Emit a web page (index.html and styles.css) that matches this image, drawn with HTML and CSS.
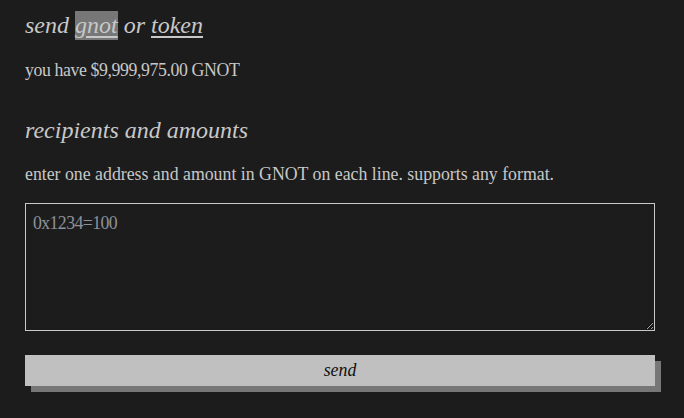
FILE: index.html
```html
<!DOCTYPE html>
<html>
<head>
<meta charset="utf-8">
<link rel="stylesheet" href="styles.css">
</head>
<body>
<main class="page">
  <h1 class="title">send <a class="tab tab-active">gnot</a> or <a class="tab">token</a></h1>
  <p class="balance">you have $9,999,975.00 GNOT</p>
  <h2 class="subtitle">recipients and amounts</h2>
  <p class="hint">enter one address and amount in GNOT on each line. supports any format.</p>
  <textarea class="recipients" placeholder="0x1234=100"></textarea>
  <button class="send-btn">send</button>
</main>
</body>
</html>
```
FILE: styles.css
```css
html, body {
  margin: 0;
  padding: 0;
  background: #1c1c1c;
}
body {
  font-family: "Liberation Serif", serif;
  color: #c8c8c8;
  font-size: 17.8px;
  line-height: 22px;
}
.page {
  width: 630px;
  padding: 0 0 40px 25px;
  display: flex;
  flex-direction: column;
}
.title, .subtitle {
  font-style: italic;
  font-weight: normal;
  font-size: 24px;
  line-height: 30px;
  margin: 0;
}
.title { margin-top: 10px; }
.tab {
  color: #c8c8c8;
  text-decoration: underline;
  text-underline-offset: 3px;
}
.tab-active {
  background: #777;
  padding: 1px 0 2px;
}
.balance { margin: 19px 0 0; letter-spacing: -0.4px; }
.subtitle { margin-top: 34px; }
.hint { margin: 18px 0 0; }
.recipients {
  margin-top: 18px;
  height: 128px;
  box-sizing: border-box;
  background: #1c1c1c;
  border: 1px solid #c8c8c8;
  color: #c8c8c8;
  font-family: inherit;
  font-size: 17.8px;
  line-height: 22px;
  padding: 8px 7px;
  resize: vertical;
  letter-spacing: -0.6px;
}
.recipients::placeholder { color: #8c929a; }
.send-btn {
  margin-top: 24px;
  height: 31px;
  border: none;
  background: #c0c0c0;
  box-shadow: 6px 6px 0 #777;
  font-family: inherit;
  font-style: italic;
  font-size: 17.8px;
  color: #111;
  padding: 0;
}
```
